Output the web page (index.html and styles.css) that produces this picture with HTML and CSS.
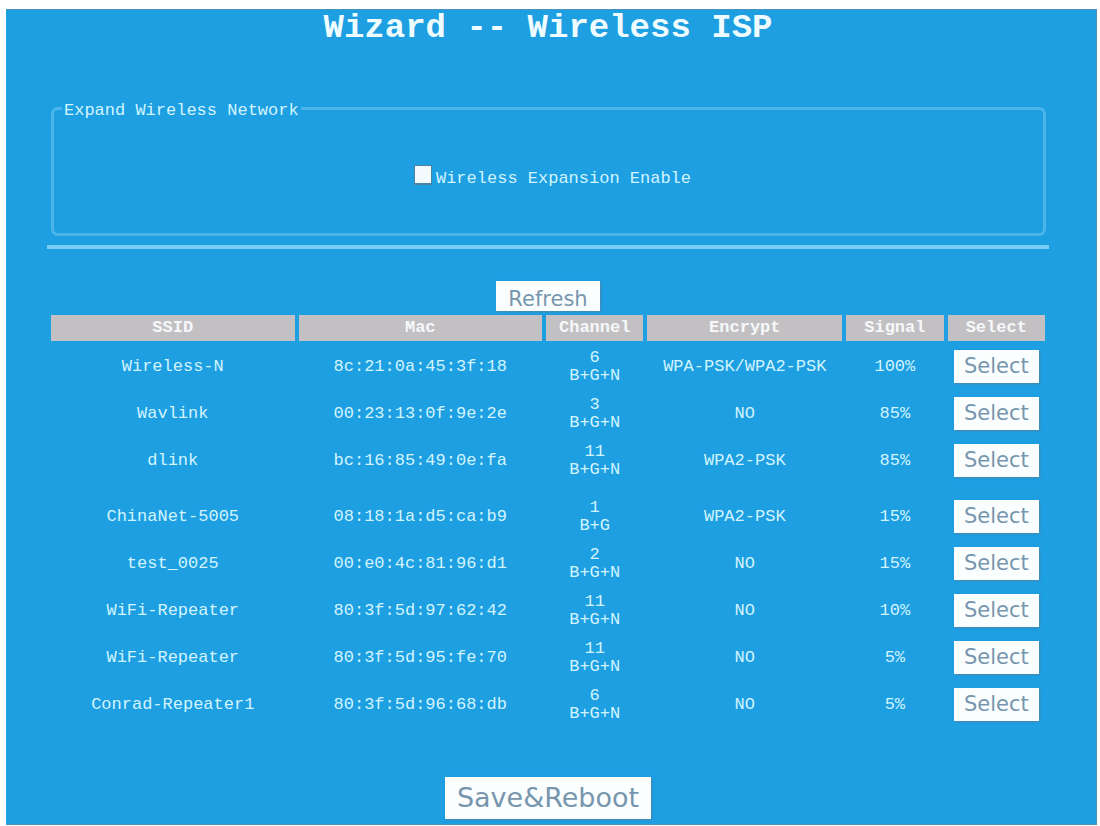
FILE: index.html
```html
<!DOCTYPE html>
<html lang="en">

<head>
    <meta charset="UTF-8">
    <meta name="viewport" content="width=device-width, initial-scale=1.0">
    <title>Wizard -- Wireless ISP</title>
    <link rel="stylesheet" href="styles.css">
</head>

<body>
    <form class="wizard">
        <h1>Wizard -- Wireless ISP</h1>

        <fieldset class="expand">
            <legend>Expand Wireless Network</legend>
            <input type="checkbox" id="expansion">
            <label for="expansion">Wireless Expansion Enable</label>
        </fieldset>

        <hr>

        <button type="button" class="btn refresh">Refresh</button>

        <table class="networks">
            <colgroup>
                <col class="col-ssid">
                <col class="col-mac">
                <col class="col-channel">
                <col class="col-encrypt">
                <col class="col-signal">
                <col class="col-select">
            </colgroup>
            <thead>
                <tr>
                    <th>SSID</th>
                    <th>Mac</th>
                    <th>Channel</th>
                    <th>Encrypt</th>
                    <th>Signal</th>
                    <th>Select</th>
                </tr>
            </thead>
            <tbody>
                <tr>
                    <td>Wireless-N</td>
                    <td>8c:21:0a:45:3f:18</td>
                    <td>6<br>B+G+N</td>
                    <td>WPA-PSK/WPA2-PSK</td>
                    <td>100%</td>
                    <td><button type="button" class="btn">Select</button></td>
                </tr>
                <tr>
                    <td>Wavlink</td>
                    <td>00:23:13:0f:9e:2e</td>
                    <td>3<br>B+G+N</td>
                    <td>NO</td>
                    <td>85%</td>
                    <td><button type="button" class="btn">Select</button></td>
                </tr>
                <tr>
                    <td>dlink</td>
                    <td>bc:16:85:49:0e:fa</td>
                    <td>11<br>B+G+N</td>
                    <td>WPA2-PSK</td>
                    <td>85%</td>
                    <td><button type="button" class="btn">Select</button></td>
                </tr>
                <tr class="group">
                    <td>ChinaNet-5005</td>
                    <td>08:18:1a:d5:ca:b9</td>
                    <td>1<br>B+G</td>
                    <td>WPA2-PSK</td>
                    <td>15%</td>
                    <td><button type="button" class="btn">Select</button></td>
                </tr>
                <tr>
                    <td>test_0025</td>
                    <td>00:e0:4c:81:96:d1</td>
                    <td>2<br>B+G+N</td>
                    <td>NO</td>
                    <td>15%</td>
                    <td><button type="button" class="btn">Select</button></td>
                </tr>
                <tr>
                    <td>WiFi-Repeater</td>
                    <td>80:3f:5d:97:62:42</td>
                    <td>11<br>B+G+N</td>
                    <td>NO</td>
                    <td>10%</td>
                    <td><button type="button" class="btn">Select</button></td>
                </tr>
                <tr>
                    <td>WiFi-Repeater</td>
                    <td>80:3f:5d:95:fe:70</td>
                    <td>11<br>B+G+N</td>
                    <td>NO</td>
                    <td>5%</td>
                    <td><button type="button" class="btn">Select</button></td>
                </tr>
                <tr>
                    <td>Conrad-Repeater1</td>
                    <td>80:3f:5d:96:68:db</td>
                    <td>6<br>B+G+N</td>
                    <td>NO</td>
                    <td>5%</td>
                    <td><button type="button" class="btn">Select</button></td>
                </tr>
            </tbody>
        </table>

        <button type="submit" class="btn save">Save&amp;Reboot</button>
    </form>
</body>

</html>
```
FILE: styles.css
```css
* {
    box-sizing: border-box;
}

body {
    margin: 0;
    padding: 9px 3px 1px 6px;
    background-color: #fff;
    font-family: "Liberation Mono", "Courier New", monospace;
    font-size: 17px;
    line-height: 18px;
    color: #d2f4ff;
}

.wizard {
    display: flex;
    flex-direction: column;
    align-items: center;
    min-height: calc(100vh - 10px);
    padding: 0 47px 5px 41px;
    background-color: #1d9fe2;
    border: 1px solid #4b93bd;
    border-left: 0;
}

h1 {
    margin: 0;
    font-size: 34px;
    line-height: 36px;
    color: #eefcff;
}

.expand {
    align-self: stretch;
    display: flex;
    align-items: center;
    justify-content: center;
    margin: 50px 3px 0 4px;
    padding: 45px 0 40px 8px;
    border: 3px solid #4cb5ec;
    border-radius: 7px;
}

.expand legend {
    padding: 6px 2px 0;
}

.expand input {
    appearance: none;
    width: 18px;
    height: 20px;
    margin: 0 4px 8px 0;
    background-color: #f4fbff;
    border: 1px solid #4d83a6;
    border-bottom-width: 2px;
}

.expand input:checked {
    background-color: #4d83a6;
}

hr {
    align-self: stretch;
    height: 4px;
    margin: 9px 0 32px;
    background-color: #78cdf4;
    border: 0;
}

.btn {
    height: 33px;
    padding: 0 10px;
    background-color: #fbfeff;
    border: 0;
    box-shadow: 1px 1px 2px #4b86ab;
    font-family: "DejaVu Sans", Verdana, sans-serif;
    font-size: 21px;
    line-height: 33px;
    color: #7796ad;
    cursor: pointer;
}

.refresh {
    height: 30px;
    padding: 2px 12px 0;
}

.networks {
    width: 100%;
    border-collapse: separate;
    border-spacing: 4px;
    table-layout: fixed;
    text-align: center;
}

.col-ssid,
.col-mac {
    width: 25%;
}

.col-channel,
.col-signal {
    width: 10%;
}

.col-encrypt {
    width: 20%;
}

.col-select {
    width: 10%;
}

.networks th {
    height: 26px;
    padding: 0;
    background-color: #c3c0c3;
    color: #f6f8fa;
}

.networks td {
    height: 43px;
    padding: 0;
}

/* extra space between the strong and the weak networks */
.networks .group td {
    height: 52px;
    padding-top: 9px;
}

.save {
    height: 42px;
    margin-top: auto;
    padding: 0 12px;
    font-size: 27px;
    line-height: 42px;
}
```
